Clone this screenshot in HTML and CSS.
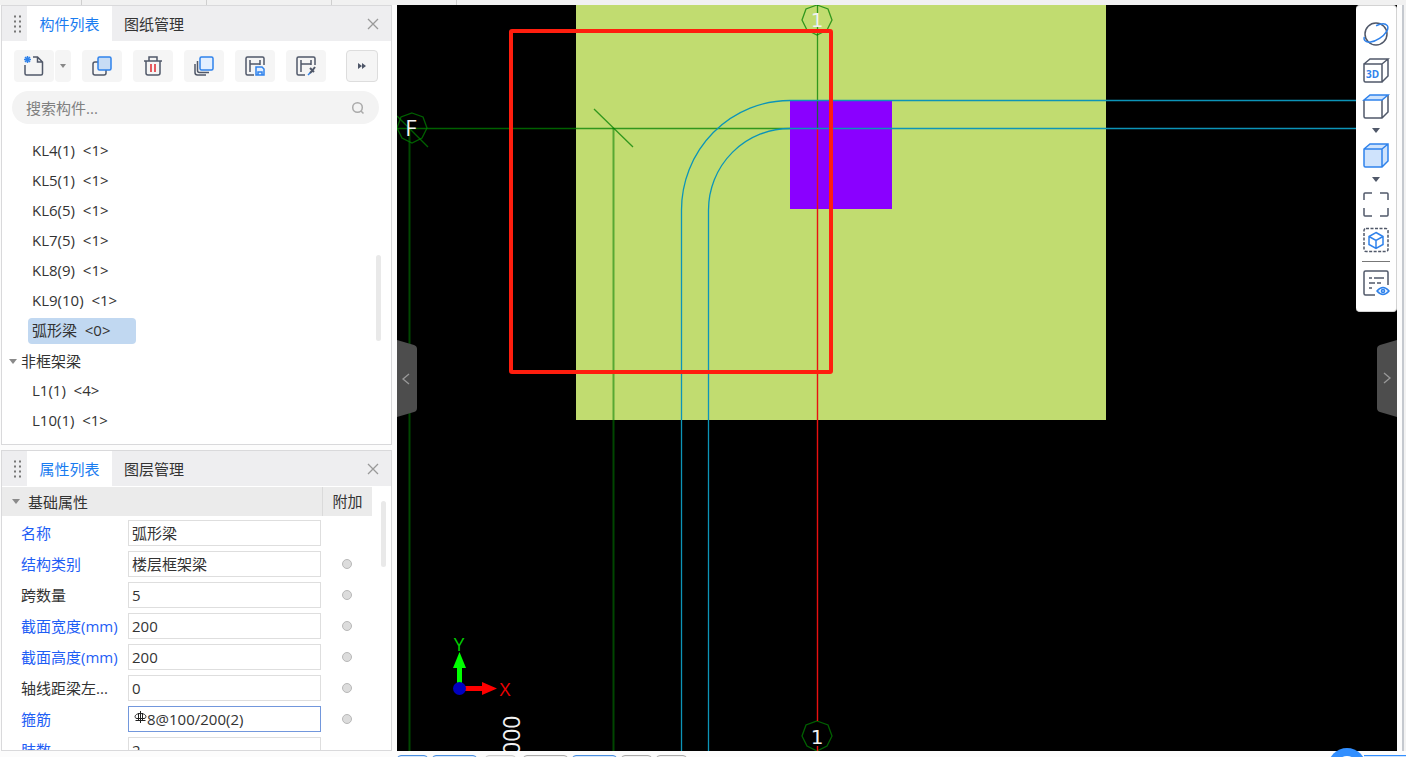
FILE: index.html
```html
<!DOCTYPE html>
<html lang="zh-CN">
<head>
<meta charset="utf-8">
<title>构件列表</title>
<link rel="stylesheet" href="styles.css">
</head>
<body>
<div class="app">
  <div class="ribbon"><span></span><span></span><span></span><span></span></div>
  <main class="main">
    <aside class="sidebar">
      <section class="panel components">
        <header class="panel-head">
          <svg class="grip" width="10" height="20" viewBox="0 0 10 20"><path d="M2 2.500h2M7 2.500h2M2 7.500h2M7 7.500h2M2 12.500h2M7 12.500h2M2 17.500h2M7 17.500h2" stroke="#777" stroke-width="2"/></svg>
          <button class="tab active">构件列表</button>
          <button class="tab">图纸管理</button>
          <button class="close" aria-label="关闭"><svg width="12" height="12" viewBox="0 0 12 12"><path d="M1 1l10 10M11 1L1 11"/></svg></button>
        </header>
        <div class="tools">
          <div class="split">
            <button class="tool" aria-label="新建"><svg width="22" height="22" viewBox="0 0 22 22"><path d="M2 10v8.500q0 1.500 1.500 1.500h14.500q1.500 0 1.500-1.500V7l-5-5H10M14.500 2v5h5"/><path class="blue" d="M1 4.500h7M4.500 1v7M2 2l5 5M7 2L2 7"/></svg></button>
            <button class="drop" aria-label="更多新建"><svg width="8" height="5" viewBox="0 0 8 5"><path d="M1 0h6L4 4z"/></svg></button>
          </div>
          <button class="tool" aria-label="复制"><svg width="22" height="22" viewBox="0 0 22 22"><rect x="2" y="7" width="13" height="13" rx="2"/><rect class="blue fill" x="7" y="2" width="13" height="13" rx="1.500"/></svg></button>
          <button class="tool" aria-label="删除"><svg width="22" height="22" viewBox="0 0 22 22"><path d="M2 6h18M7 6V2h8v4M4 6v12q0 2 2 2h10q2 0 2-2V6"/><path class="red" d="M9 9v8M13 9v8"/></svg></button>
          <button class="tool" aria-label="层间复制"><svg width="22" height="22" viewBox="0 0 22 22"><path d="M4.500 6v9.500q0 2 2 2H16M2 9v8.500q0 2.500 2.500 2.500H13"/><rect class="blue pale" x="7" y="2" width="13" height="13" rx="1.500"/></svg></button>
          <button class="tool" aria-label="存档"><svg width="22" height="22" viewBox="0 0 22 22"><path d="M10 20H3.500Q2 20 2 18.500v-15Q2 2 3.500 2h15Q20 2 20 3.500V10M6 5v12M6 9h10M16 5v5"/><path class="blue pale" d="M12 12h6l2 2v6h-8zM14 20v-3h4v3"/></svg></button>
          <button class="tool" aria-label="提取"><svg width="22" height="22" viewBox="0 0 22 22"><path d="M10 20H3.500Q2 20 2 18.500v-15Q2 2 3.500 2h15Q20 2 20 3.500V10M6 5v12M6 9h10M16 5v5"/><path class="blue" d="M13 20l3-3"/><path d="M15 18l3-3M15 13l4 4M17 16l3-4" stroke-width="2"/></svg></button>
          <button class="more" aria-label="更多"><svg width="10" height="6" viewBox="0 0 10 6"><path d="M1 0v6l4-3zM5 0v6l4-3z"/></svg></button>
        </div>
        <div class="search">
          <input type="text" placeholder="搜索构件..." aria-label="搜索构件">
          <svg width="14" height="14" viewBox="0 0 14 14"><circle cx="6.500" cy="6.500" r="4.800"/><path d="M10 10l2.500 2.500"/></svg>
        </div>
        <div class="tree-wrap">
          <ul class="tree">
            <li><span>KL4(1)  &lt;1&gt;</span></li>
            <li><span>KL5(1)  &lt;1&gt;</span></li>
            <li><span>KL6(5)  &lt;1&gt;</span></li>
            <li><span>KL7(5)  &lt;1&gt;</span></li>
            <li><span>KL8(9)  &lt;1&gt;</span></li>
            <li><span>KL9(10)  &lt;1&gt;</span></li>
            <li><span class="selected">弧形梁  &lt;0&gt;</span></li>
            <li class="group"><svg width="8" height="5" viewBox="0 0 8 5"><path d="M0 0h8L4 5z"/></svg>非框架梁</li>
            <li><span>L1(1)  &lt;4&gt;</span></li>
            <li><span>L10(1)  &lt;1&gt;</span></li>
          </ul>
          <div class="scroll tree-scroll"></div>
        </div>
      </section>

      <section class="panel properties">
        <header class="panel-head">
          <svg class="grip" width="10" height="20" viewBox="0 0 10 20"><path d="M2 2.500h2M7 2.500h2M2 7.500h2M7 7.500h2M2 12.500h2M7 12.500h2M2 17.500h2M7 17.500h2" stroke="#777" stroke-width="2"/></svg>
          <button class="tab active">属性列表</button>
          <button class="tab">图层管理</button>
          <button class="close" aria-label="关闭"><svg width="12" height="12" viewBox="0 0 12 12"><path d="M1 1l10 10M11 1L1 11"/></svg></button>
        </header>
        <div class="prop-body">
          <div class="prop-list">
            <div class="group-head">
              <button class="group-name"><svg width="8" height="5" viewBox="0 0 8 5"><path d="M0 0h8L4 5z"/></svg>基础属性</button>
              <span class="attach">附加</span>
            </div>
            <div class="row"><label class="key" for="p1">名称</label><div class="field"><input id="p1" type="text" value="弧形梁"></div></div>
            <div class="row"><label class="key" for="p2">结构类别</label><div class="field"><input id="p2" type="text" value="楼层框架梁"></div><input class="dot" type="checkbox" aria-label="附加结构类别"></div>
            <div class="row"><label for="p3">跨数量</label><div class="field"><input id="p3" type="text" value="5"></div><input class="dot" type="checkbox" aria-label="附加跨数量"></div>
            <div class="row"><label class="key" for="p4">截面宽度(mm)</label><div class="field"><input id="p4" type="text" value="200"></div><input class="dot" type="checkbox" aria-label="附加截面宽度"></div>
            <div class="row"><label class="key" for="p5">截面高度(mm)</label><div class="field"><input id="p5" type="text" value="200"></div><input class="dot" type="checkbox" aria-label="附加截面高度"></div>
            <div class="row"><label for="p6">轴线距梁左...</label><div class="field"><input id="p6" type="text" value="0"></div><input class="dot" type="checkbox" aria-label="附加轴线距梁左边线距离"></div>
            <div class="row"><label class="key" for="p7">箍筋</label><div class="field current"><svg width="15" height="20" viewBox="0 0 15 20"><path d="M8.500 2v12M6.500 4v7M10.500 4v7M3.500 11.500h10M8.500 4.500C2 4.500 2 9.500 5 9.500h7C15 9.500 15 4.500 8.500 4.500"/></svg><input id="p7" type="text" value="8@100/200(2)"></div><input class="dot" type="checkbox" aria-label="附加箍筋"></div>
            <div class="row"><label class="key" for="p8">肢数</label><div class="field"><input id="p8" type="text" value="2"></div></div>
          </div>
          <div class="scroll prop-scroll"></div>
        </div>
      </section>
    </aside>

    <section class="canvas">
      <svg class="drawing" viewBox="397 5 1000 746" preserveAspectRatio="xMinYMin slice">
        <rect x="576" y="5" width="530" height="415" fill="#c1dc70"/>
        <rect x="790" y="101" width="102" height="108" fill="#8a00ff"/>
        <g class="axis">
          <path d="M397 128.500H790M817.500 5V128"/>
          <path d="M409.500 128V751M613.500 128V751" stroke-width="2" stroke-opacity=".55"/>
          <path d="M397 116L428 147M594 109L633 147"/>
          <path d="M817 5L828 9L832 20L827 30L817 35L807 30L802 20L806 9ZM412 113L423 117L427 128L422 138L412 143L402 138L397 128L401 117Z"/>
          <path d="M817 721L828 725L832 736L827 746L817 751L807 746L802 736L806 725Z"/>
        </g>
        <path class="red-axis" d="M817.500 128V721M817.500 746V751"/>
        <g class="beam">
          <path d="M1397 100.500H790A108.500 109.500 0 0 0 681.500 210V751"/>
          <path d="M1397 128.500H790A81.500 81.500 0 0 0 708.500 210V751"/>
        </g>
        <rect x="511" y="31" width="320" height="341" rx="1" fill="none" stroke="#ff1e0e" stroke-width="4"/>
        <g class="mark" text-anchor="middle">
          <text class="one" x="817" y="27">1</text>
          <text class="one" x="817" y="744">1</text>
          <text class="big" x="411" y="136">F</text>
          <text class="digits" transform="translate(520 755) rotate(-90)" text-anchor="start">000</text>
        </g>
        <path d="M457 688V668H453L459.500 652L466 668H462V688Z" fill="#0f0"/>
        <path d="M460 686H482V682L497 688.500L482 695V691H460Z" fill="#f00"/>
        <circle cx="459.500" cy="688.500" r="6.500" fill="#0000c0"/>
        <text class="dir" x="459" y="651" fill="#0c0" text-anchor="middle">Y</text>
        <text class="dir" x="505" y="696" fill="#e00" text-anchor="middle">X</text>
      </svg>
      <button class="handle left" aria-label="收起左侧"><svg width="20" height="77" viewBox="0 0 20 77"><path class="shape" d="M0 0L17 5Q20 6 20 9V68Q20 71 17 72L0 77Z"/><path class="chev" d="M12 34l-6 5l6 5"/></svg></button>
      <button class="handle right" aria-label="收起右侧"><svg width="20" height="77" viewBox="0 0 20 77"><path class="shape" d="M20 0L3 5Q0 6 0 9V68Q0 71 3 72L20 77Z"/><path class="chev" d="M7 33l6 5l-6 5"/></svg></button>
      <nav class="viewbar">
        <button aria-label="动态观察"><svg width="28" height="26" viewBox="0 0 28 26"><circle cx="14" cy="13" r="11"/><path class="blue" transform="translate(14 12) rotate(-33)" d="M-12 -3A13.500 6 0 0 0 -13.500 0A13.500 6.500 0 0 0 13.500 0Q13 -5 4 -6"/></svg></button>
        <button aria-label="三维"><svg width="28" height="26" viewBox="0 0 28 26"><path d="M2 7h18v18H3.500Q2 25 2 23.500ZM2 7l6-5h18l-6 5M26 2v17l-6 6"/><text class="label3d" x="4" y="21">3D</text></svg></button>
        <button aria-label="俯视"><svg width="28" height="26" viewBox="0 0 28 26"><path d="M2 7v16.500Q2 25 3.500 25H20l6-6V2M20 7v18"/><path class="blue fill" d="M2 7l6-5h18l-6 5z"/></svg></button>
        <button class="tiny" aria-label="选择视角"><svg width="8" height="5" viewBox="0 0 8 5"><path class="tri" d="M0 0h8L4 5z"/></svg></button>
        <button aria-label="实体显示"><svg width="28" height="26" viewBox="0 0 28 26"><path class="blue fill" d="M2 7l6-5h18v17l-6 6H3.500Q2 25 2 23.500zM2 7h18v18M20 7l6-5"/></svg></button>
        <button class="tiny" aria-label="选择显示方式"><svg width="8" height="5" viewBox="0 0 8 5"><path class="tri" d="M0 0h8L4 5z"/></svg></button>
        <button aria-label="全屏"><svg width="28" height="26" viewBox="0 0 28 26"><path d="M2 9V3q0-1 1-1h7M18 2h7q1 0 1 1v6M26 17v7q0 1-1 1h-7M10 25H3q-1 0-1-1v-7"/></svg></button>
        <button aria-label="局部三维"><svg width="28" height="26" viewBox="0 0 28 26"><rect x="2" y="1.500" width="24" height="23" rx="2" stroke-dasharray="3 1.500"/><path class="blue" d="M14 5.500l7 4v8l-7 4l-7-4v-8zM7 9.500l7 4l7-4M14 13.500v8"/></svg></button>
        <hr>
        <button aria-label="显示设置"><svg width="28" height="26" viewBox="0 0 28 26"><path d="M13 25H3.500Q2 25 2 23.500V2.500Q2 1 3.500 1h21Q26 1 26 2.500V15M7 8h3M12 8h10M7 13h6M15 13h4M7 18h3"/><path class="blue pale" d="M15 21q6-7 12 0q-6 7-12 0z"/><circle class="blue" cx="21" cy="21" r="1.500"/></svg></button>
      </nav>
    </section>
    <div class="edge"><span></span></div>
  </main>
  <footer class="status">
    <button class="chip small on" aria-label="捕捉"></button><button class="chip on" aria-label="动态输入"></button><button class="chip small faint" aria-label="正交"></button><button class="chip" aria-label="选择"></button><button class="chip on" aria-label="显示"></button><button class="chip small" aria-label="上一层"></button><button class="chip small" aria-label="下一层"></button>
    <div class="helper"></div>
    <button class="assistant" aria-label="助手"><svg width="38" height="38" viewBox="0 0 38 38"><circle cx="19" cy="19" r="19" fill="#328fff"/><circle cx="19" cy="19" r="11" fill="#fff"/></svg></button>
  </footer>
</div>
</body>
</html>
```

FILE: styles.css
```css
* { box-sizing: border-box; }
body {
  margin: 0;
  background: #fcfcfc;
  color: #333;
  font: 15px/20px "Open Sans", "Noto Sans CJK SC", sans-serif;
}
button, input { font: inherit; color: inherit; margin: 0; padding: 0; border: 0; background: none; }
svg { display: block; fill: none; }
.app { display: flex; flex-direction: column; height: 100vh; overflow: hidden; }

.ribbon { display: flex; flex: none; height: 5px; padding-left: 81px; background: #f1f1f1; }
.ribbon span { width: 125px; border-left: 1px solid #cfcfcf; }

.main { display: flex; flex: 1; min-height: 0; }
.sidebar { display: flex; flex: none; flex-direction: column; gap: 5px; width: 397px; padding: 0 5px 0 1px; }
.panel { display: flex; flex-direction: column; border: 1px solid #d9d9db; background: #fff; }
.components { flex: none; }
.properties { flex: 1; min-height: 0; }

.panel-head { display: flex; flex: none; align-items: center; height: 35px; padding: 0 12px 0 10px; background: #eeeef0; }
.grip { margin-right: 5px; }
.tab { height: 35px; padding: 0 12px; }
.tab.active { width: 85px; background: #fff; color: #1a7cf0; }
.close { margin-left: auto; }
.close svg { stroke: #999; stroke-width: 1.3; }

.tools { display: flex; gap: 11px; padding: 9px 13px 9px 12px; }
.split { display: flex; gap: 1px; }
.tool, .drop, .more { display: flex; align-items: center; justify-content: center; height: 32px; border-radius: 4px; background: #f5f5f5; }
.tool { width: 40px; }
.drop { width: 16px; }
.drop path { fill: #888; }
.more { width: 32px; margin-left: auto; border: 1px solid #ddd; }
.more path { fill: #4e5668; }
.tool svg, .viewbar svg { stroke: #505869; stroke-width: 1.5; }
.tool .blue, .viewbar .blue { stroke: #2f82eb; }
.tool .red { stroke: #e0262c; }
.fill { fill: #c7dcf5; }
.viewbar .fill { fill: #cfe3fc; }
.pale { fill: #e3efff; }

.search { display: flex; align-items: center; height: 33px; margin: 0 12px 12px 10px; padding: 0 14px; border-radius: 17px; background: #f3f3f3; }
.search input { flex: 1; min-width: 0; outline: 0; }
.search input::placeholder { color: #808080; opacity: 1; }
.search svg { stroke: #aaa; stroke-width: 1.5; }

.tree-wrap { display: flex; justify-content: space-between; padding: 0 10px 8px 0; }
.tree { flex: 1; margin: 0; padding: 0; list-style: none; }
.tree li { display: flex; align-items: center; height: 30px; padding-left: 26px; }
.tree span { height: 26px; padding: 2px 4px; line-height: 20px; border-radius: 4px; white-space: pre; }
.tree .selected { width: 108px; background: #c1d8f1; }
.tree .group { gap: 4px; padding-left: 7px; }
.group svg, .group-name svg { fill: #8a8a8a; }
.scroll { width: 5px; border-radius: 3px; background: #e9e9e9; }
.tree-scroll { height: 86px; margin-top: 119px; }

.prop-body { display: flex; flex: 1; min-height: 0; padding-top: 1px; overflow: hidden; }
.prop-list { flex: 1; }
.group-head { display: flex; height: 29px; margin-bottom: 1px; background: #ebebeb; }
.group-name { display: flex; flex: 1; align-items: center; gap: 8px; padding-left: 10px; }
.attach { width: 50px; border-left: 1px solid #dadada; line-height: 29px; text-align: center; }
.row { display: flex; align-items: center; height: 31px; padding-left: 19px; }
.row label { width: 107px; white-space: nowrap; }
.row .key { color: #1e5ef5; }
.field { display: flex; align-items: center; width: 193px; height: 26px; padding: 0 3px; border: 1px solid #dedede; background: #fff; }
.field input { flex: 1; min-width: 0; height: 22px; outline: 0; }
.field svg { stroke: #222; stroke-width: 1; }
.field.current { border-color: #7297dc; }
.dot { appearance: none; width: 10px; height: 10px; margin-left: 21px; border: 1px solid #b8b8b8; border-radius: 50%; background: #dcdcdc; }
.prop-scroll { height: 66px; margin: 14px 5px 0 9px; }

.canvas { position: relative; flex: 1; min-width: 0; overflow: hidden; background: #000; }
.drawing { width: 100%; height: 100%; }
.axis { stroke: #008000; stroke-opacity: .75; stroke-width: 1.3; }
.red-axis { stroke: #e81010; stroke-width: 1.4; }
.beam { stroke: #0c94b8; stroke-width: 1.3; }
.mark { fill: #f2f2f2; }
.one { font: 20px "DejaVu Sans", sans-serif; }
.big { font: 22px "Open Sans", sans-serif; }
.digits { font: 23px "Open Sans", sans-serif; }
.dir { font: 19px "Open Sans", sans-serif; }

.handle { position: absolute; bottom: 334px; }
.handle.left { left: 0; }
.handle.right { right: 0; }
.handle .shape { fill: #4d4d4d; }
.handle .chev { stroke: #999; stroke-width: 1.3; }

.viewbar { position: absolute; top: 0; right: 0; display: flex; flex-direction: column; align-items: center; gap: 10px; width: 41px; padding: 15px 1px 15px 0; border: 1px solid #d3d3d3; border-left: 0; border-radius: 4px; background: #fff; }
.viewbar .tiny { margin: -1px 0; }
.viewbar .tri { fill: #505869; stroke: none; }
.viewbar hr { width: 28px; margin: -2px 0; border: 0; border-top: 1px solid #777; }
.label3d { fill: #2f82eb; stroke: none; font: bold 10px "Open Sans", sans-serif; }

.edge { flex: none; width: 9px; padding-left: 5px; }
.edge span { display: block; height: 100%; border-left: 2px solid #c5c9cf; background: #f3f3f3; }

.status { position: relative; display: flex; flex: none; gap: 4px; height: 6px; padding: 4px 0 0 397px; }
.chip { flex: none; width: 45px; height: 24px; border: 1px solid #aaa; border-radius: 4px; background: #f2f2f2; }
.chip.small { width: 31px; }
.chip.on { border-color: #4a8fe0; background: #d6e7fb; }
.chip.faint { margin: 0 3px 0 4px; border-color: #ccc; }
.helper { flex: none; width: 42px; height: 24px; margin-left: auto; border-top: 1px solid #328fff; background: #cfe4fd; }
.assistant { position: absolute; right: 40px; top: -3px; }
```
